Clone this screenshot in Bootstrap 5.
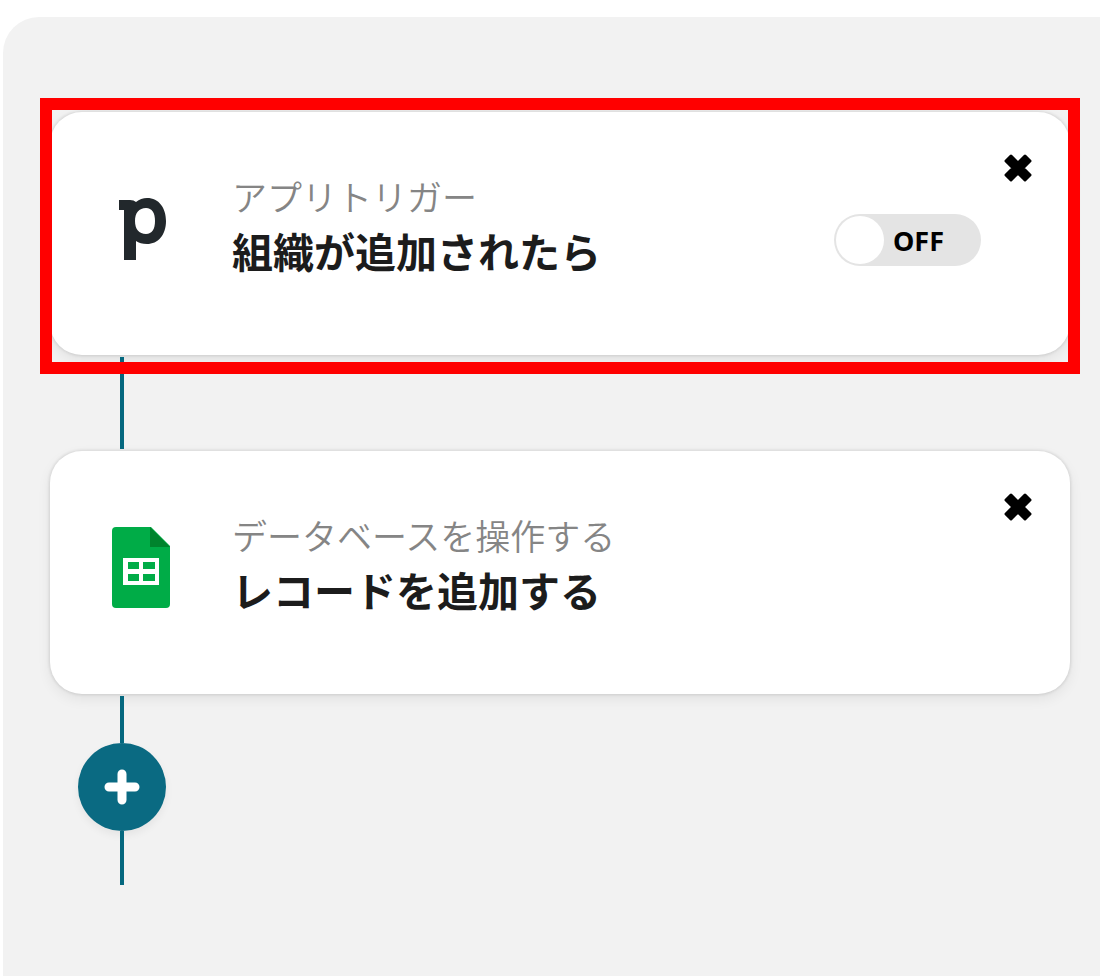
<!DOCTYPE html>
<html lang="ja">
<head>
<meta charset="utf-8">
<meta name="viewport" content="width=device-width, initial-scale=1">
<title>フロー</title>
<link href="https://cdn.jsdelivr.net/npm/bootstrap@5.3.0/dist/css/bootstrap.min.css" rel="stylesheet">
<style>
  body { background: #fff; color: #1c1c1c; font-family: "Noto Sans CJK JP", "Noto Sans", sans-serif; }
  .flow-panel { background: #f2f2f2; border-top-left-radius: 36px; margin: 17px 0 0 3px; padding: 95px 30px 92px 47px; min-height: calc(100vh - 17px); }
  .step-card { background: #fff; border-radius: 32px; padding: 42px 38px 77px 62px; box-shadow: 0 0 3px 1px rgba(0,0,0,.1), 0 5px 14px rgba(0,0,0,.07); }
  .step-icon { width: 60px; height: 82px; margin: 34px 60px 0 0; }
  .step-text { padding-top: 14px; line-height: 55px; }
  .step-kind { font-size: 35px; font-weight: 350; color: #858585; }
  .step-name { font-size: 41px; font-weight: 700; line-height: 55px; }
  .step-toggle { width: 147px; height: 52px; margin: 60px 23px 0 0; padding: 2px; border-radius: 26px; background: #e4e4e4; font: 700 27px/48px "Noto Sans", sans-serif; color: #000; gap: 9px; cursor: pointer; }
  .step-toggle input { appearance: none; width: 48px; height: 48px; margin: 0; border-radius: 50%; background: #fff; cursor: pointer; }
  .step-toggle span { padding-top: 2px; }
  .step-close { width: 28px; height: 28px; line-height: 0; }
  .step-frame { height: 243px; pointer-events: none; }
  .highlight { inset: -14px -10px -19px; border: 12px solid red; }
  .connector { width: 4px; margin-left: 70px; background: #05687f; }
  .gap-line { height: 92px; margin-top: 2px; margin-bottom: 2px; }
  .short-line { height: 47px; margin-top: 2px; }
  .end-line { height: 54px; }
  .add-step { width: 88px; height: 88px; margin-left: 28px; background: #0a6a82; box-shadow: 0 4px 8px rgba(0,0,0,.06); }
</style>
</head>
<body>
<svg class="d-none" aria-hidden="true">
  <symbol id="cross" viewBox="0 0 28 28"><path d="M7 2L14 9L21 2L26 7L19 14L26 21L21 26L14 19L7 26L2 21L9 14L2 7Z" fill="#000" stroke="#000" stroke-width="3" stroke-linejoin="round"/></symbol>
</svg>
<main class="flow-panel">
  <div class="position-relative">
    <section class="step-card d-flex align-items-start">
      <svg class="step-icon flex-shrink-0" viewBox="0 0 60 82" aria-hidden="true">
        <path fill="#22282c" fill-rule="evenodd" d="M7 12H18Q22 12 24 14Q29 10 35 10C47 10 54 20 54 33C54 47 46 56 35 56Q28 56 24 53V72H12V22H7ZM34 20C27 20 23 25 23 33C23 41 27 46 34 46C40 46 43 41 43 33C43 25 40 20 34 20Z"/>
      </svg>
      <div class="step-text flex-grow-1">
        <div class="step-kind">アプリトリガー</div>
        <h2 class="step-name m-0">組織が追加されたら</h2>
      </div>
      <label class="step-toggle d-flex align-items-center flex-shrink-0">
        <input type="checkbox" role="switch"><span>OFF</span>
      </label>
      <button type="button" class="step-close btn p-0 border-0 flex-shrink-0" aria-label="削除">
        <svg width="28" height="28"><use href="#cross"/></svg>
      </button>
    </section>
    <div class="connector gap-line"></div>
    <div class="step-frame position-absolute top-0 start-0 end-0"><div class="highlight position-absolute"></div></div>
  </div>
  <section class="step-card d-flex align-items-start">
    <svg class="step-icon flex-shrink-0" viewBox="0 0 60 82" aria-hidden="true">
      <path fill="#00ac47" d="M4 0H39L58 19V77Q58 81 54 81H4Q0 81 0 77V4Q0 0 4 0Z"/>
      <path fill="#00832d" d="M38 0L58 20H38Z"/>
      <path fill="#fff" d="M11 31H47V58H11Z"/>
      <path fill="#00ac47" d="M16 35H27V42H16ZM31 35H43V42H31ZM16 47H27V54H16ZM31 47H43V54H31Z"/>
    </svg>
    <div class="step-text flex-grow-1">
      <div class="step-kind">データベースを操作する</div>
      <h2 class="step-name m-0">レコードを追加する</h2>
    </div>
    <button type="button" class="step-close btn p-0 border-0 flex-shrink-0" aria-label="削除">
      <svg width="28" height="28"><use href="#cross"/></svg>
    </button>
  </section>
  <div class="connector short-line"></div>
  <button type="button" class="add-step btn rounded-circle border-0 p-0 d-flex align-items-center justify-content-center" aria-label="ステップを追加">
    <svg width="36" height="36" viewBox="0 0 36 36"><path d="M18 5V31M5 18H31" stroke="#fff" stroke-width="9" stroke-linecap="round"/></svg>
  </button>
  <div class="connector end-line"></div>
</main>
<script src="https://cdn.jsdelivr.net/npm/bootstrap@5.3.0/dist/js/bootstrap.bundle.min.js"></script>
</body>
</html>
